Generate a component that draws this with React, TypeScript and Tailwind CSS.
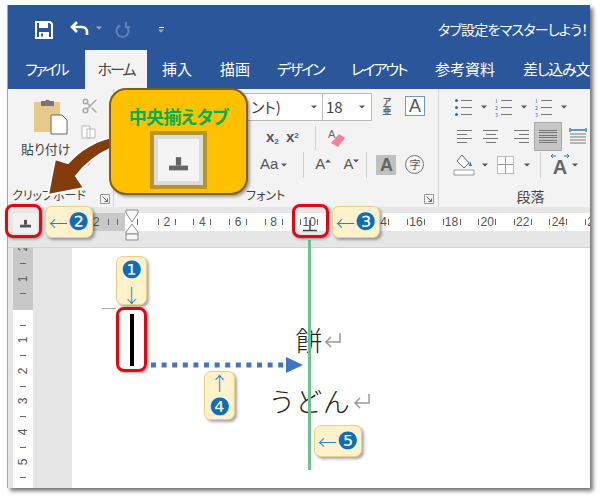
import { Scissors } from "lucide-react";

// Tiny dropdown caret used throughout the ribbon
function Caret({ className = "" }: { className?: string }) {
  return (
    <svg width="6" height="4" viewBox="0 0 6 4" className={className}>
      <path d="M0 0.5h6L3 3.5z" fill="#555" />
    </svg>
  );
}

function Lines({ kind }: { kind: "left" | "center" | "right" | "full" }) {
  const rows = kind === "full" ? [18, 18, 18, 18, 18, 18] : [15, 10, 15, 10];
  const cls =
    kind === "center" ? "items-center" : kind === "right" ? "items-end" : "items-start";
  return (
    <div className={`flex flex-col ${cls} ${kind === "full" ? "gap-[1.5px]" : "gap-[3px]"}`}>
      {rows.map((w, i) => (
        <div key={i} className="h-px bg-[#777]" style={{ width: w }} />
      ))}
    </div>
  );
}

function Bullets({ mark }: { mark: string }) {
  return (
    <div className="flex flex-col gap-[3px] w-[17px]">
      {[0, 1, 2].map((i) => (
        <div key={i} className="flex items-center gap-[3px] h-[4px]">
          {mark === "dot" ? (
            <div className="w-[3px] h-[3px] rounded-full bg-[#2b6cb0]" />
          ) : (
            <div className="w-[3px] text-[5px] leading-none text-[#2b6cb0]">{i + 1}</div>
          )}
          <div className="h-px flex-1 bg-[#777]" />
        </div>
      ))}
    </div>
  );
}

function Launcher() {
  return (
    <svg width="10" height="10" viewBox="0 0 10 10">
      <path d="M.5 .5h9v9h-9z" fill="none" stroke="#999" />
      <path d="M2.5 2.5l5 5M7.5 4.5v3h-3" fill="none" stroke="#666" />
    </svg>
  );
}

function TabStop({ size = 18, color = "#555" }: { size?: number; color?: string }) {
  return (
    <svg width={size} height={size} viewBox="0 0 18 18">
      <path d="M6.5 3h5v8h-5z" fill={color} />
      <path d="M0 11h18v4.5H0z" fill={color} />
    </svg>
  );
}

function ReturnMark() {
  return (
    <svg width="18" height="16" viewBox="0 0 18 16" className="absolute left-full top-[23px] ml-[1px]">
      <path d="M16 1v9H2M7 5l-5 5 5 5" fill="none" stroke="#9a9a9a" strokeWidth="1.5" />
    </svg>
  );
}

function Arrow({ children }: { children: React.ReactNode }) {
  return (
    <span className="w-[19px] text-center font-['Noto_Sans_CJK_JP',sans-serif] text-[19px] font-light leading-none text-[#1b86c8]">
      {children}
    </span>
  );
}

function Badge({
  className,
  children,
}: {
  className: string;
  children: React.ReactNode;
}) {
  return (
    <div
      className={`absolute flex items-center justify-center rounded-[7px] border border-[#efcf85] bg-[#fff2cc] font-['DejaVu_Sans',sans-serif] leading-none text-[#0b6fb8] shadow-[2px_2px_3px_rgba(0,0,0,0.35)] ${className}`}
    >
      {children}
    </div>
  );
}

function HotBox({ className }: { className: string }) {
  return (
    <div
      className={`absolute rounded-[8px] border-[3.5px] border-[#e30613] shadow-[1px_1px_3px_rgba(0,0,0,0.4)] ${className}`}
    />
  );
}

const tabs = [
  { label: "ファイル", cls: "w-[77px] pl-[17px] tracking-[-2.5px]" },
  { label: "ホーム", cls: "w-[62px] justify-center bg-[#f3f3f3] text-[#444] tracking-[-2px]" },
  { label: "挿入", cls: "w-[58px] pl-[15px]" },
  { label: "描画", cls: "w-[57px] pl-[15px]" },
  { label: "デザイン", cls: "w-[74px] pl-[15px] tracking-[-2.2px]" },
  { label: "レイアウト", cls: "w-[84px] pl-[15px] tracking-[-2px]" },
  { label: "参考資料", cls: "w-[88px] pl-[15px]" },
  { label: "差し込み文書", cls: "w-[90px] pl-[15px] whitespace-nowrap tracking-[-1.2px]" },
];

const topCells = [2, 4, 6, 8, 10, 12, 14, 16, 18, 20, 22, 24, 26];

export default function App() {
  return (
    <div className="relative h-[498px] w-[600px] overflow-hidden bg-white font-['Noto_Sans_CJK_JP','Liberation_Sans',sans-serif] [font-feature-settings:'palt']">
      <div className="ml-[7px] mt-[5px] flex h-[483px] w-[583px] flex-col overflow-hidden border-l border-[#a9a9a9] shadow-[3px_3px_4px_rgba(0,0,0,0.55)]">
        {/* Title bar with quick access toolbar */}
        <div className="flex h-[45px] items-center bg-[#2b579a] pt-[4px] text-white">
          <svg width="18" height="18" viewBox="0 0 18 18" className="ml-[27px]">
            <path d="M1 1h14l2 2v14H1z" fill="none" stroke="#fff" strokeWidth="2" />
            <path d="M4 2h9v5H4zM4 11h10v6H4z" fill="#fff" />
            <path d="M6 12.5h2v3H6z" fill="#2b579a" />
          </svg>
          <svg width="20" height="18" viewBox="0 0 20 18" className="ml-[17px]">
            <path d="M2 6h10a5 5 0 0 1 5 5v3M7 1L2 6l5 5" fill="none" stroke="#fff" strokeWidth="2.6" />
          </svg>
          <Caret className="ml-[6px] -mt-[4px] invert" />
          <svg width="16" height="18" viewBox="0 0 16 18" className="ml-[13px]">
            <path d="M10 4.5a6 6 0 1 1-5 0M11 1v5h4" fill="none" stroke="#5f83b8" strokeWidth="2" />
          </svg>
          <div className="ml-[27px] flex flex-col items-center gap-[1px]">
            <div className="h-px w-[5px] bg-white" />
            <Caret className="invert" />
          </div>
          <div className="ml-auto w-[152px] whitespace-nowrap text-[14px] tracking-[-0.75px]">タブ設定をマスターしよう！</div>
        </div>

        {/* Ribbon tabs */}
        <div className="flex h-[39px] overflow-hidden bg-[#2b579a] text-[15px] text-white">
          {tabs.map((t) => (
            <div key={t.label} className={`flex shrink-0 items-center ${t.cls}`}>
              {t.label}
            </div>
          ))}
        </div>

        {/* Ribbon */}
        <div className="flex h-[118px] bg-[#f3f3f3] text-[#444]">
          {/* Clipboard group */}
          <div className="flex w-[106px] flex-col border-r border-[#d4d4d4]">
            <div className="flex h-[92px]">
              <div className="flex w-[66px] flex-col items-start pl-[13px] pt-[8px]">
                <svg width="36" height="38" viewBox="0 0 36 38" className="ml-[12px]">
                  <path d="M1 5h26v30H1z" fill="#e9c88e" />
                  <path d="M8 4h4a3 3 0 0 1 5 0h4v5H8z" fill="#777" />
                  <path d="M18 18h11l5 5v14H18z" fill="#fff" stroke="#666" />
                </svg>
                <div className="mt-[5px] whitespace-nowrap text-[13px] leading-[18px]">貼り付け</div>
              </div>
              <div className="flex flex-col gap-[10px] pl-[7px] pt-[8px]">
                <Scissors size={18} className="text-[#aaa]" />
                <svg width="18" height="14" viewBox="0 0 18 14">
                  <path d="M1 1h8v12H1zM6 4h8v9H6z" fill="#fff" stroke="#bbb" />
                </svg>
                <svg width="18" height="18" viewBox="0 0 18 18" className="ml-[2px]">
                  <path d="M12 2l3 3-5 6-3-3z" fill="#777" />
                  <path d="M7 8l3 3-5 6-2-2z" fill="#e8a33d" />
                </svg>
              </div>
            </div>
            <div className="flex flex-1 items-end justify-between pb-[3px] pl-[4px] pr-[3px]">
              <span className="whitespace-nowrap text-[12px] leading-[18px]">クリップボード</span>
              <Launcher />
            </div>
          </div>

          {/* Font group */}
          <div className="flex w-[325px] flex-col border-r border-[#d4d4d4]">
            <div className="flex h-[32px] items-start pt-[4px]">
              <div className="flex h-[28px] w-[209px] items-center justify-between border border-[#bbb] bg-white pr-[5px] text-[15px]">
                <span className="pl-[136px] whitespace-nowrap">ント)</span>
                <Caret />
              </div>
              <div className="flex h-[28px] w-[49px] items-center justify-between border border-l-0 border-[#bbb] bg-white pl-[3px] pr-[6px] text-[15px]">
                18
                <Caret />
              </div>
              <div className="ml-[8px] mt-[4px] flex w-[14px] flex-col items-center text-[9px] font-bold leading-[9px] text-[#666]">
                <span>ア</span>
                <span>亜</span>
              </div>
              <div className="ml-[11px] mt-[3px] flex h-[20px] w-[20px] items-center justify-center border border-[#6d9ac4] bg-white font-['Liberation_Sans',sans-serif] text-[18px] leading-none text-[#555]">
                A
              </div>
            </div>
            <div className="flex h-[29px] items-center pl-[152px] pt-[4px] font-['Liberation_Sans',sans-serif] text-[#555]">
              <div className="w-[20px] text-[15px] font-bold">
                x<sub className="text-[8px] text-[#2b6cb0]">2</sub>
              </div>
              <div className="w-[29px] text-[15px] font-bold">
                x<sup className="text-[8px] text-[#2b6cb0]">2</sup>
              </div>
              <div className="h-[24px] w-px bg-[#d0d0d0]" />
              <svg width="20" height="20" viewBox="0 0 20 20" className="ml-[11px]">
                <text x="1" y="10" fontSize="11" fill="#666">A</text>
                <path d="M4 15l8-9 6 4-7 9z" fill="#f0859b" />
              </svg>
            </div>
            <div className="flex h-[29px] items-center pl-[146px] text-[#555]">
              <span className="font-['Liberation_Sans',sans-serif] text-[15px]">Aa</span>
              <Caret className="ml-[3px]" />
              <div className="ml-[16px] h-[26px] w-px bg-[#d0d0d0]" />
              <span className="ml-[11px] font-['Liberation_Sans',sans-serif] text-[15px]">A</span>
              <Caret className="-mt-[8px] rotate-180" />
              <span className="ml-[12px] font-['Liberation_Sans',sans-serif] text-[15px]">A</span>
              <Caret className="-mt-[8px]" />
              <div className="ml-[7px] h-[26px] w-px bg-[#d0d0d0]" />
              <div className="ml-[9px] flex h-[20px] w-[20px] items-center justify-center bg-[#c0c0c0] font-['Liberation_Sans',sans-serif] text-[18px] font-bold leading-none text-[#666]">
                A
              </div>
              <div className="ml-[9px] flex h-[19px] w-[19px] items-center justify-center rounded-full border border-[#777] text-[11px] leading-none">
                字
              </div>
            </div>
            <div className="flex flex-1 items-end justify-between pb-[3px] pl-[132px] pr-[4px]">
              <span className="text-[12px] leading-[18px]">フォント</span>
              <Launcher />
            </div>
          </div>

          {/* Paragraph group */}
          <div className="flex flex-1 flex-col">
            <div className="flex h-[32px] items-center pl-[16px] pt-[4px]">
              <Bullets mark="dot" />
              <Caret className="ml-[9px]" />
              <div className="ml-[8px]"><Bullets mark="num" /></div>
              <Caret className="ml-[9px]" />
              <div className="ml-[8px]"><Bullets mark="num" /></div>
              <Caret className="ml-[9px]" />
            </div>
            <div className="flex h-[29px] items-center pl-[18px] pt-[2px]">
              <Lines kind="left" />
              <div className="ml-[11px]"><Lines kind="center" /></div>
              <div className="ml-[16px]"><Lines kind="right" /></div>
              <div className="ml-[5px] flex h-[29px] w-[28px] shrink-0 items-center justify-center border border-[#a8a8a8] bg-[#c6c6c6]">
                <Lines kind="full" />
              </div>
              <svg width="18" height="20" viewBox="0 0 18 20" className="ml-[7px]">
                <path d="M1 7h16M1 10h16M1 13h16M1 16h16" stroke="#777" />
                <path d="M1 1v4M17 1v4M2 3h14" stroke="#2b7cc0" strokeWidth="1.4" fill="none" />
              </svg>
            </div>
            <div className="flex h-[29px] items-center pl-[14px]">
              <svg width="23" height="22" viewBox="0 0 23 22">
                <path d="M9 1l7 8-5 5-7-7z" fill="#fff" stroke="#666" />
                <path d="M17 7l2 5h-3z" fill="#2b7cc0" />
                <path d="M1 16h20v5H1z" fill="#fff" stroke="#999" />
              </svg>
              <Caret className="ml-[6px]" />
              <div className="ml-[9px] grid h-[18px] w-[17px] grid-cols-2 border border-[#bbb] bg-white">
                <div className="border-b border-r border-[#999]" />
                <div className="border-b border-[#999]" />
                <div className="border-r border-[#999]" />
                <div />
              </div>
              <Caret className="ml-[10px]" />
              <div className="ml-[10px] h-[26px] w-px bg-[#d0d0d0]" />
              <div className="ml-[9px] flex flex-col items-center font-['Liberation_Sans',sans-serif] text-[20px] font-bold leading-none text-[#666]">
                <svg width="20" height="6" viewBox="0 0 20 6">
                  <path d="M1 3h5M1 3l2-2M1 3l2 2M19 3h-5M19 3l-2-2M19 3l-2 2" stroke="#2b7cc0" fill="none" />
                </svg>
                <span className="-mt-[2px]">A</span>
              </div>
              <Caret className="ml-[2px]" />
            </div>
            <div className="flex flex-1 items-end justify-center pb-[2px] pl-[32px] text-[14px] leading-[18px]">
              段落
            </div>
          </div>
        </div>

        {/* Horizontal ruler */}
        <div className="flex h-[41px] items-start border-b border-[#d2d2d2] bg-[#e6e6e6] pt-[6px]">
          <div className="ml-[5px] flex h-[20px] w-[24px] items-center justify-center bg-[#f2f2f2]">
            <TabStop size={11} />
          </div>
          <div className="ml-[56px] flex h-[18px] flex-1 overflow-hidden bg-white font-['Liberation_Sans',sans-serif] text-[12px] leading-[18px] text-[#555]">
            <div className="flex w-[32px] shrink-0 items-center gap-[8px] bg-[#c8c8c8]">
              <span>2</span>
              <div className="h-[6px] w-px bg-[#666]" />
              <div className="h-[6px] w-px bg-[#666]" />
            </div>
            <div className="flex w-[24px] shrink-0 items-center justify-center">
              <div className="h-[6px] w-px bg-[#666]" />
            </div>
            {topCells.map((n) => (
              <div key={n} className="flex w-[35.6px] shrink-0 items-center justify-center">
                <div className="h-[6px] w-px bg-[#666]" />
                <span className="w-[16px] text-center">{n}</span>
                <div className="h-[6px] w-px bg-[#666]" />
              </div>
            ))}
          </div>
        </div>

        {/* Document area with the vertical ruler */}
        <div className="flex flex-1 overflow-hidden bg-[#e6e6e6]">
          <div className="ml-[5px] flex h-full w-[20px] flex-col font-['Liberation_Sans',sans-serif] text-[12px] text-[#555]">
            <div className="h-[62px] overflow-hidden bg-[#c8c8c8]">
              <div className="-mt-[7.6px]">
                {["2", "", "1", ""].map((v, i) => (
                  <div key={i} className="flex h-[15.25px] items-center justify-center">
                    {v ? <span className="-rotate-90">{v}</span> : <div className="h-px w-[6px] bg-[#666]" />}
                  </div>
                ))}
              </div>
            </div>
            <div className="flex-1 bg-white pt-[7.4px]">
              {["", "1", "", "2", "", "3", "", "4", "", "5", ""].map((v, i) => (
                <div key={i} className="flex h-[15.25px] items-center justify-center">
                  {v ? <span className="-rotate-90">{v}</span> : <div className="h-px w-[6px] bg-[#666]" />}
                </div>
              ))}
            </div>
          </div>
          <div className="ml-[39px] flex-1 bg-white pt-[61px]">
            <div className="flex w-[474px] flex-col items-center text-[27px] font-light leading-[61px] text-[#222]">
              <div className="relative h-[61px]">
                餅
                <ReturnMark />
              </div>
              <div className="relative ml-[4px] h-[61px] tracking-[3px] [font-feature-settings:'normal']">
                うどん
                <ReturnMark />
              </div>
            </div>
          </div>
        </div>
      </div>

      {/* Annotation layer */}
      <div className="absolute left-[102px] top-[308px] h-px w-[14px] bg-[#aaa]" />
      <div className="absolute left-[130px] top-[314px] h-[52px] w-[4px] bg-black" />
      <div className="absolute left-[308px] top-[240px] h-[230px] w-[3px] bg-[#6fc08f]" />
      <svg width="14" height="12" viewBox="0 0 14 12" className="absolute left-[303px] top-[220px]">
        <path d="M7 0v10M0 10.5h14" stroke="#444" strokeWidth="1.4" fill="none" />
      </svg>

      {/* Indent markers on the ruler */}
      <svg width="14" height="32" viewBox="0 0 14 32" className="absolute left-[125px] top-[209px]">
        <path d="M1 1h12v3L7 13 1 4z" fill="#f7f7f7" stroke="#8a8a8a" />
        <path d="M7 15l6 8v2H1v-2z" fill="#f7f7f7" stroke="#8a8a8a" />
        <path d="M1 25h12v6H1z" fill="#f7f7f7" stroke="#8a8a8a" />
      </svg>

      {/* Dotted guide between the tab stop and the text */}
      <svg width="156" height="18" viewBox="0 0 156 18" className="absolute left-[150px] top-[356px]">
        <path d="M1 9h136" stroke="#4472c4" strokeWidth="5" strokeDasharray="5 5.6" />
        <path d="M136 1l17 8-17 8z" fill="#4472c4" />
      </svg>

      {/* Curved arrow from the callout down to the tab selector */}
      <svg width="80" height="70" viewBox="0 0 80 70" className="absolute left-[40px] top-[131px]">
        <path
          d="M72 6Q46 12 28 32L15 28 8 64 44 57 36 45Q50 27 72 17Z"
          fill="#843c0c"
          stroke="#fff"
          strokeWidth="2"
        />
      </svg>

      {/* Callout showing the centre tab icon */}
      <div className="absolute left-[109px] top-[88px] flex h-[107px] w-[139px] flex-col items-center rounded-[17px] border-2 border-[#7f5f10] bg-[#ffc000] shadow-[2px_2px_3px_rgba(0,0,0,0.35)]">
        <div className="mt-[14px] whitespace-nowrap text-[18px] font-bold leading-[24px] text-[#00b050] [font-feature-settings:'normal'] tracking-[-0.6px]">
          中央揃えタブ
        </div>
        <div className="mt-[3px] flex h-[58px] w-[57px] items-center justify-center border-[4px] border-[#b8952a] bg-[#dcdcdc] p-[4px]">
          <div className="flex h-full w-full items-center justify-center bg-[#f4f4f4] pt-[6px]">
            <TabStop size={19} color="#666" />
          </div>
        </div>
      </div>

      <HotBox className="left-[5px] top-[204px] h-[34px] w-[37px]" />
      <HotBox className="left-[292px] top-[204px] h-[34px] w-[37px]" />
      <HotBox className="left-[116px] top-[307px] h-[65px] w-[31px]" />

      <Badge className="left-[45px] top-[206px] h-[32px] w-[48px] text-[24px]">
        <Arrow>←</Arrow>❷
      </Badge>
      <Badge className="left-[332px] top-[206px] h-[32px] w-[48px] text-[24px]">
        <Arrow>←</Arrow>❸
      </Badge>
      <Badge className="left-[314px] top-[425px] h-[32px] w-[48px] text-[24px]">
        <Arrow>←</Arrow>❺
      </Badge>
      <Badge className="left-[116px] top-[256px] h-[49px] w-[31px] flex-col gap-[3px] text-[24px]">
        ❶<Arrow>↓</Arrow>
      </Badge>
      <Badge className="left-[204px] top-[371px] h-[49px] w-[31px] flex-col gap-[3px] text-[24px]">
        <Arrow>↑</Arrow>❹
      </Badge>
    </div>
  );
}
